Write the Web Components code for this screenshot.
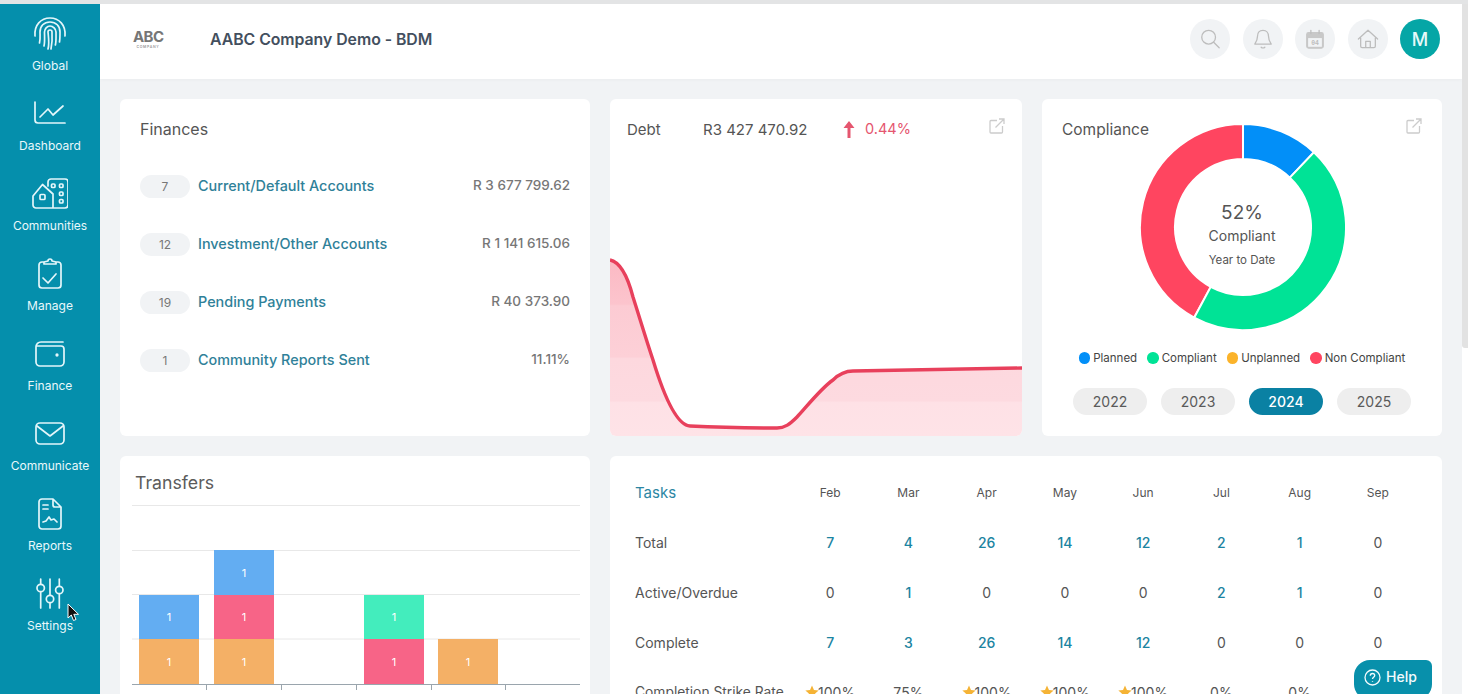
<!DOCTYPE html>
<html lang="en">
<head>
<meta charset="utf-8">
<title>AABC Company Demo</title>
<style>
html,body{margin:0;height:694px;overflow:hidden;background:#fff;font-family:Inter,"Noto Sans",sans-serif;}
</style>
</head>
<body>
<app-shell>
  <side-nav slot="nav">
    <nav-item label="Global"><svg viewBox="0 0 36 36"><path d="M3 21C2 10 9 3 18 3s16 7 15 18M7.500 28c1-4 .5-8 .5-11C8 11 12 7 18 7s10 4 10 10c0 3 0 7-.5 10M12 31c1-4 .5-10 .5-14 0-3 2.500-6 5.500-6s6 3 6 6c0 4 .3 9-.6 13M16 34c1.500-5 .5-12 0-17 0-1 1-2 2-2s2 1 2 2c.3 5 .3 11-1 17"/></svg></nav-item>
    <nav-item label="Dashboard"><svg viewBox="0 0 36 36"><path d="M3 7V25a3 3 0 0 0 3 3H33M8 22l8-8 5 6 10-9"/></svg></nav-item>
    <nav-item label="Communities"><svg viewBox="0 0 36 36"><path d="M1 21 10.500 9.500 21 19V33H4a3 3 0 0 1-3-3ZM16 11V7a3 3 0 0 1 3-3H33a3 3 0 0 1 3 3V30a3 3 0 0 1-3 3H21"/><rect x="8" y="19.500" width="5" height="5" rx="1"/><rect x="19.500" y="9" width="3.500" height="3.500" rx="1"/><rect x="27.500" y="9" width="3.500" height="3.500" rx="1"/><rect x="27.500" y="17" width="3.500" height="3.500" rx="1"/><rect x="27.500" y="24.500" width="3.500" height="3.500" rx="1"/></svg></nav-item>
    <nav-item label="Manage"><svg viewBox="0 0 36 36"><path d="M12 7H10a3 3 0 0 0-3 3V30a3 3 0 0 0 3 3H26a3 3 0 0 0 3-3V10a3 3 0 0 0-3-3H24M12 9V7l4-1a2 2 0 0 1 4 0l4 1V9ZM11 23l5 5 8-9"/></svg></nav-item>
    <nav-item label="Finance"><svg viewBox="0 0 36 36"><path d="M31 7H9a5 5 0 0 0-5 5V27a4 4 0 0 0 4 4H28a4 4 0 0 0 4-4V14a3 3 0 0 0-3-3H4"/><circle cx="25" cy="20" r=".8"/></svg></nav-item>
    <nav-item label="Communicate"><svg viewBox="0 0 36 36"><rect x="4" y="8" width="28" height="21" rx="4"/><path d="M5 11 18 21 31 11"/></svg></nav-item>
    <nav-item label="Reports"><svg viewBox="0 0 36 36"><path d="M10 4H21L29 12V31a3 3 0 0 1-3 3H10a3 3 0 0 1-3-3V7a3 3 0 0 1 3-3ZM21 4V10a2 2 0 0 0 2 2H29M11 10H16M11 14H16M11 27l3-1 3-4 2 3 3-1 3 3"/></svg></nav-item>
    <nav-item label="Settings"><svg viewBox="0 0 36 36"><path d="M8.700 4V9M8.700 17V33M18 4V20M18 28V33M27.300 4V11M27.300 19V33"/><circle cx="8.700" cy="13" r="3.700"/><circle cx="18" cy="24" r="3.700"/><circle cx="27.300" cy="15" r="3.700"/></svg></nav-item>
  </side-nav>
  <top-bar slot="top"></top-bar>
  <finance-card></finance-card>
  <debt-card></debt-card>
  <compliance-card></compliance-card>
  <transfers-card></transfers-card>
  <tasks-card></tasks-card>
</app-shell>
<help-button></help-button>
<mouse-pointer></mouse-pointer>

<script>
const simple = (name, css, html) => customElements.define(name, class extends HTMLElement {
  constructor(){ super(); this.attachShadow({mode:'open'}).innerHTML = `<style>${css}</style>${html}`; }
});

const EXT = `<svg class="ext" viewBox="0 0 16 16" width="16" height="16" fill="none" stroke="#ccc" stroke-width="1.300"><path d="M8 2.500H2a1 1 0 0 0-1 1V14a1 1 0 0 0 1 1H12.500a1 1 0 0 0 1-1V8M6.500 9.500 15 1M10 1H15V6"/></svg>`;

simple('app-shell', `
  :host{display:grid;grid-template-columns:100px 1fr 6px;grid-template-rows:4px 690px;width:1468px;height:694px;overflow:hidden;}
  .strip{grid-column:1/4;background:#e3e4e5;}
  main{background:#f1f3f5;display:flex;flex-direction:column;min-width:0;height:690px;overflow:hidden;}
  .grid{display:grid;grid-template-columns:470px 412px 400px;grid-template-rows:337px 1fr;gap:20px;padding:20px 20px 0;}
  .bar{background:#fff;}
  .thumb{height:344px;background:#e2e2e2;border-radius:0 0 0 3px;}
`, `<div class="strip"></div><slot name="nav"></slot>
  <main><slot name="top"></slot><div class="grid"><slot></slot></div></main>
  <div class="bar"><div class="thumb"></div></div>`);

simple('side-nav', `:host{display:block;background:#058fac;height:690px;}`, `<slot></slot>`);

customElements.define('nav-item', class extends HTMLElement {
  constructor(){ super();
    this.attachShadow({mode:'open'}).innerHTML = `<style>
      :host{display:flex;flex-direction:column;align-items:center;height:80px;padding-top:11px;box-sizing:border-box;color:#e9f8fb;font-size:12px;line-height:16px;}
      ::slotted(svg){width:36px;height:36px;fill:none;stroke:#e4f6fa;stroke-width:1.700;stroke-linecap:round;stroke-linejoin:round;}
      span{margin-top:7px;}
    </style><slot></slot><span>${this.getAttribute('label')}</span>`;
  }
});

simple('round-btn', `
  :host{display:flex;align-items:center;justify-content:center;width:40px;height:40px;border-radius:50%;background:#f1f3f5;flex:none;}
  ::slotted(svg){width:22px;height:22px;fill:none;stroke:#bdbdbd;stroke-width:1.400;stroke-linecap:round;stroke-linejoin:round;}
`, `<slot></slot>`);

simple('top-bar', `
  :host{display:flex;align-items:center;height:75px;box-sizing:border-box;padding:0 22px 5px 33px;background:#fff;box-shadow:0 1px 4px rgba(0,0,0,.03);flex:none;}
  .logo{width:30px;color:#767676;font-weight:700;font-size:15px;line-height:14px;letter-spacing:-.6px;text-align:center;}
  .logo small{display:block;font-size:3.500px;line-height:4px;margin-top:1px;font-weight:600;letter-spacing:.7px;color:#999;}
  h1{margin:0 0 0 47px;font-size:15.850px;font-weight:600;color:#434f5e;letter-spacing:-.05px;white-space:nowrap;}
  .right{margin-left:auto;display:flex;gap:12.500px;align-items:center;}
  .me{width:40px;height:40px;border-radius:50%;background:#05a6a6;color:#e6f9f9;font-size:18px;font-weight:500;display:flex;align-items:center;justify-content:center;}
  .cal{font:700 7px "Liberation Mono",monospace;fill:#bdbdbd;stroke:none;}
`, `<div class="logo">ABC<small>COMPANY</small></div><h1>AABC Company Demo - BDM</h1>
  <div class="right">
    <round-btn><svg viewBox="0 0 24 24"><circle cx="10.500" cy="10" r="7.500"/><path d="M16 15.500 22 21.500"/></svg></round-btn>
    <round-btn><svg viewBox="0 0 24 24"><path d="M12 2.500c-4 0-6 3-6 6.500 0 4-1.500 6-3 8.500h18c-1.500-2.500-3-4.500-3-8.500 0-3.500-2-6.500-6-6.500ZM10 21c1 1 3 1 4 0"/></svg></round-btn>
    <round-btn><svg viewBox="0 0 24 24"><rect x="3" y="5" width="18" height="17" rx="2" fill="#c8c8c8" stroke="#c8c8c8"/><rect x="4.500" y="11" width="15" height="9.500" fill="#f1f3f5" stroke="none"/><path d="M7.500 2.500V6M16.500 2.500V6"/><text class="cal" x="12" y="18.500" text-anchor="middle">04</text></svg></round-btn>
    <round-btn><svg viewBox="0 0 24 24"><path d="M1.500 12 12 2.500 22.500 12M4 10.500V20a1.500 1.500 0 0 0 1.500 1.500h13A1.500 1.500 0 0 0 20 20V10.500M9.500 21.500V14.500h5V21.500"/></svg></round-btn>
    <div class="me">M</div>
  </div>`);

const card = `:host{display:block;background:#fff;border-radius:6px;overflow:hidden;min-width:0;}`;

customElements.define('finance-row', class extends HTMLElement {
  constructor(){ super();
    this.attachShadow({mode:'open'}).innerHTML = `<style>
      :host{display:flex;align-items:center;height:58px;font-size:14.400px;}
      .n{width:50px;height:23px;border-radius:12px;background:#f1f3f5;color:#777;font-size:12px;display:flex;align-items:center;justify-content:center;margin-right:8px;flex:none;}
      .l{color:#2f8199;font-weight:500;margin-bottom:2px;}
      .v{margin-left:auto;color:#777;font-weight:500;font-size:13.500px;margin-bottom:3px;}
    </style><span class="n">${this.getAttribute('n')}</span><span class="l">${this.getAttribute('l')}</span><span class="v">${this.getAttribute('v')}</span>`;
  }
});

simple('finance-card', card + `
  .in{padding:20px;}
  h2{margin:0 0 18px;font-size:16px;line-height:20px;font-weight:400;color:#555;}
`, `<div class="in"><h2>Finances</h2>
  <finance-row n="7" l="Current/Default Accounts" v="R 3 677 799.62"></finance-row>
  <finance-row n="12" l="Investment/Other Accounts" v="R 1 141 615.06"></finance-row>
  <finance-row n="19" l="Pending Payments" v="R 40 373.90"></finance-row>
  <finance-row n="1" l="Community Reports Sent" v="11.11%"></finance-row></div>`);

simple('debt-card', card + `
  header{display:grid;grid-template-columns:76px 140px 12px 10px auto 1fr;align-items:center;height:60px;padding:0 17px;font-size:15px;color:#555;}
  .pct{grid-column:5;color:#e5566f;font-size:14.500px;margin-bottom:2px;}
  .ext{justify-self:end;margin-top:-6px;}
  .chart{display:block;width:412px;height:277px;}
`, `<header><span>Debt</span><span>R3 427 470.92</span>
    <svg width="12" height="17" viewBox="0 0 12 17" fill="#e5566f"><path d="M6 0 11.500 7H7.500V17H4.500V7H.5Z"/></svg>
    <span class="pct">0.44%</span>${EXT}</header>
  <svg class="chart" viewBox="0 0 412 277">
    <defs><linearGradient id="g" gradientUnits="userSpaceOnUse" x1="0" y1="101" x2="0" y2="277">
      <stop offset="0" stop-color="#fbb9c3"/><stop offset=".25" stop-color="#fcc4cd"/><stop offset=".26" stop-color="#fccbd3"/><stop offset=".55" stop-color="#fdd0d7"/><stop offset=".56" stop-color="#fdd8de"/><stop offset=".8" stop-color="#fddae0"/><stop offset=".81" stop-color="#fee1e6"/><stop offset="1" stop-color="#fee3e7"/>
    </linearGradient></defs>
    <path fill="url(#g)" d="M0 101C10 103 17 115 23 138C30 160 36 180 43 201C50 224 64 266 80 267C100 268 150 269 167 269C175 269 180 265 187 258S210 230 223 221C230 214 236 212 243 212L412 209V277H0Z"/>
    <path fill="none" stroke="#e8405c" stroke-width="3.400" d="M0 101C10 103 17 115 23 138C30 160 36 180 43 201C50 224 64 266 80 267C100 268 150 269 167 269C175 269 180 265 187 258S210 230 223 221C230 214 236 212 243 212L412 209"/>
  </svg>`);

function arc(a0,a1,R,r,cx,cy){
  const p=(a,q)=>[cx+q*Math.sin(a*Math.PI/180),cy-q*Math.cos(a*Math.PI/180)].map(v=>v.toFixed(2)).join(' ');
  const lg=(a1-a0)>180?1:0;
  return `M${p(a0,R)}A${R} ${R} 0 ${lg} 1 ${p(a1,R)}L${p(a1,r)}A${r} ${r} 0 ${lg} 0 ${p(a0,r)}Z`;
}

simple('compliance-card', card + `
  :host{font-size:11.500px;color:#555;}
  .stack{display:grid;height:232px;}
  .stack>*{grid-area:1/1;}
  h2{margin:20px 0 0 20px;font-size:15.500px;line-height:22px;font-weight:400;justify-self:start;align-self:start;}
  .ext{justify-self:end;align-self:start;margin:19px 20px 0 0;}
  .donut{width:206px;height:206px;justify-self:center;margin:25px 0 0 2px;display:block;}
  .mid{justify-self:center;margin:102px 0 0 0;text-align:center;width:120px;}
  .mid b{display:block;font-weight:400;font-size:19px;line-height:24px;}
  .mid i{display:block;font-style:normal;font-size:14px;line-height:22px;}
  .mid em{display:block;font-style:normal;font-size:11.500px;line-height:24px;margin-top:1px;}
  .leg{display:flex;justify-content:center;gap:10px;margin:19px 0 0 0;height:16px;line-height:16px;white-space:nowrap;color:#444;}
  .leg span{display:flex;align-items:center;gap:3px;}
  .leg u{width:11.500px;height:11.500px;border-radius:50%;display:block;}
  .yrs{display:flex;justify-content:center;gap:14px;margin-top:22px;}
  .yrs span{width:74px;height:27px;border-radius:14px;background:#eeeeee;color:#5a5a5a;font-size:14px;display:flex;align-items:center;justify-content:center;}
  .yrs .on{background:#0a81a3;color:#fff;font-weight:500;}
`, `<div class="stack"><h2>Compliance</h2>${EXT}
    <svg class="donut" viewBox="0 0 206 206">
      <g stroke="#fff" stroke-width="2">
      <path fill="#ff4560" d="${arc(208.3,360,103,68,103,103)}"/>
      <path fill="#028ff8" d="${arc(0,43.5,103,68,103,103)}"/>
      <path fill="#00e396" d="${arc(43.5,208.3,103,68,103,103)}"/>
      </g>
    </svg>
    <div class="mid"><b>52%</b><i>Compliant</i><em>Year to Date</em></div>
  </div>
  <div class="leg"><span><u style="background:#028ff8"></u>Planned</span><span><u style="background:#00e396"></u>Compliant</span><span><u style="background:#fbb32a"></u>Unplanned</span><span><u style="background:#ff4560"></u>Non Compliant</span></div>
  <div class="yrs"><span>2022</span><span>2023</span><span class="on">2024</span><span>2025</span></div>`);

const bars = [[19,133,60,45,'#f4b066'],[19,89,60,44,'#63adf2'],[94,133,60,45,'#f4b066'],[94,89,60,44,'#f76487'],[94,44,60,45,'#63adf2'],[244,133,60,45,'#f76487'],[244,89,60,44,'#43edbd'],[318,133,60,45,'#f4b066']]
 .map(([x,y,w,h,c])=>`<rect x="${x}" y="${y}" width="${w}" height="${h}" fill="${c}"/><text x="${x+w/2}" y="${y+h/2+4}" text-anchor="middle" font-size="11" fill="#fff">1</text>`).join('');

simple('transfers-card', card + `
  :host{font-size:12px;}
  h2{margin:0 10px 0 12px;padding:16px 3px 12px;font-size:17.700px;line-height:21px;font-weight:400;color:#5c5c5c;border-bottom:1.500px solid #e8e8e8;}
  svg{display:block;width:470px;height:190px;}
`, `<h2>Transfers</h2>
  <svg viewBox="0 0 470 190">
    <g stroke="#e8e8e8"><path d="M12 44.500H460M12 88.500H460M12 133H460"/></g>
    ${bars}
    <path stroke="#9aa5ad" fill="none" d="M12 178.500H460M86.500 178V184M161.500 178V184M236.500 178V184M311.500 178V184M385.500 178V184"/>
  </svg>`);

const star = `<svg width="14" height="14" viewBox="0 0 24 24" fill="#f5b335" style="vertical-align:-1px;margin-right:-1px"><path d="M12 1l3.400 7.400 8 .9-6 5.400 1.700 8L12 18.600 4.900 22.700l1.700-8-6-5.400 8-.9Z"/></svg>`;
const months=['Feb','Mar','Apr','May','Jun','Jul','Aug','Sep'];
const rows=[['Total',[7,4,26,14,12,2,1,0]],['Active/Overdue',[0,1,0,0,0,2,1,0]],['Complete',[7,3,26,14,12,0,0,0]]];
const rate=[[1,'100%'],[0,'75%'],[1,'100%'],[1,'100%'],[1,'100%'],[0,'0%'],[0,'0%'],[0,'']];
simple('tasks-card', card + `
  :host{height:300px;grid-column:2/4;}
  .g{display:grid;grid-template-columns:156px repeat(8,1fr);grid-auto-rows:50px;align-items:center;padding:11px 25px 0;font-size:14px;color:#555;}
  .g>*{white-space:nowrap;}
  .c{text-align:center;}
  .m{font-size:12px;}
  .t{color:#2c86a3;font-size:15px;}
  .a{color:#1b84a1;font-weight:500;}
  .s{font-size:13.800px;}
`, `<div class="g"><span class="t">Tasks</span>${months.map(m=>`<span class="c m">${m}</span>`).join('')}
  ${rows.map(([l,v])=>`<span>${l}</span>${v.map(n=>`<span class="c ${n?'a':''}">${n}</span>`).join('')}`).join('')}
  <span class="s">Completion Strike Rate</span>${rate.map(([s,t])=>`<span class="c">${s?star:''}${t}</span>`).join('')}</div>`);

simple('help-button', `
  :host{position:fixed;left:1354px;top:660px;width:78px;height:40px;background:#0890ab;border-radius:16px 6px 16px 16px;color:#f3fbfd;display:flex;align-items:flex-start;gap:5px;padding:8px 0 0 10px;box-sizing:border-box;font-size:14px;line-height:18px;font-weight:500;}
  svg{flex:none;}
`, `<svg width="17" height="17" viewBox="0 0 17 17" fill="none" stroke="#f3fbfd" stroke-width="1.300" style="margin-top:1px"><circle cx="8.500" cy="8.500" r="7.500"/><path d="M6.300 6.700c0-3 4.400-2.800 4.400-.2 0 1.700-2.200 1.700-2.200 3.400M8.500 12v.8"/></svg><span>Help</span>`);

simple('mouse-pointer', `
  :host{position:fixed;left:67px;top:603px;width:13px;height:19px;display:block;}
`, `<svg width="13" height="19" viewBox="0 0 13 19"><path d="M1 1V15L4.300 12 6.500 17.500 9 16.500 6.800 11.300H11.500Z" fill="#111" stroke="#fff" stroke-width="1"/></svg>`);
</script>
</body>
</html>
